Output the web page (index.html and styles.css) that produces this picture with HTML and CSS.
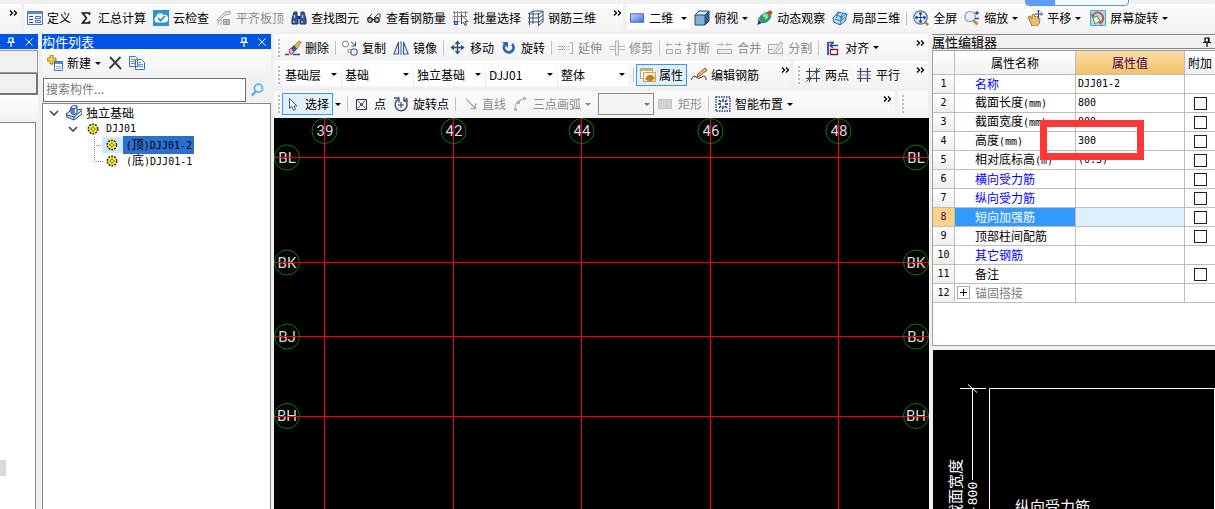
FILE: index.html
```html
<!DOCTYPE html>
<html lang="zh-CN">
<head>
<meta charset="utf-8">
<title>构件列表</title>
<link rel="stylesheet" href="styles.css">
</head>
<body>
<svg class="defs" aria-hidden="true">
  <linearGradient id="blue" x1="0" y1="0" x2="1" y2="1"><stop offset="0" stop-color="#c3daff"/><stop offset="1" stop-color="#3f6fe0"/></linearGradient>
  <symbol id="i-define" viewBox="0 0 16 16"><path d="M.5 1.500h15v13H.5z" fill="#eef4fc" stroke="#4a76b8"/><path d="M1 2h14v2H1z" fill="#5d8fd6"/><path d="M2 6.500h4M2 9.500h4M2 12.500h4" stroke="#24509a"/><path d="M8.500 6.500h5v2h-5zM8.500 10.500h5v2h-5z" fill="#fff" stroke="#4a76b8"/></symbol>
  <symbol id="i-sigma" viewBox="0 0 16 16"><path d="M11.500 5V3H4.500l4 5-4 5h7v-2" fill="none" stroke="#111" stroke-width="1.600"/></symbol>
  <symbol id="i-cloud" viewBox="0 0 16 16"><path d="M0 0h16v16H0z" fill="#2b93dc"/><path d="M4 12.500a3 3 0 0 1-.8-5.700A4 4 0 0 1 10.500 5a3.800 3.800 0 0 1 1.800 7.400z" fill="#fff"/><path d="M5 8l2.500 2.500L12 6" fill="none" stroke="#1c7fcb" stroke-width="1.600"/></symbol>
  <symbol id="i-slab" viewBox="0 0 16 16"><path d="M1 10l8-8 5-1v3l-5 1-6 6zM2 15v-5M5 15V9" stroke="#aaa" fill="#e2e2e2"/><path d="M7.500 9.500h6v5h-6z" fill="#ccc" stroke="#999"/><path d="M10.500 9v6M7 12h7" stroke="#999"/></symbol>
  <symbol id="i-bino" viewBox="0 0 16 16"><path d="M3 2h3v3l1 2v7H1V9zM10 2h3l2 7v5H9V7l1-2z" fill="#35589a" stroke="#1e376c"/><path d="M6 6h4v3H6z" fill="#1e376c"/><path d="M3.500 5v3M11.500 5v3M3 11v2M11 11v2" stroke="#a9c4f0" stroke-width="1.400"/></symbol>
  <symbol id="i-glass" viewBox="0 0 16 16"><path d="M1 9l5-5M8 8l4-4q2-1 2 1v3" fill="none" stroke="#444"/><circle cx="4" cy="10" r="2.300" fill="#bbb" stroke="#222" stroke-width="1.200"/><circle cx="11" cy="10" r="2.300" fill="#bbb" stroke="#222" stroke-width="1.200"/><path d="M6 9.500h3" stroke="#222"/></symbol>
  <symbol id="i-batch" viewBox="0 0 16 16"><path d="M1.500 1v11M4.500 1v11M8.500 1v8M0 2.500h15M0 6.500h14M0 11.500h7M12.500 1v5" stroke="#888" fill="none"/><path d="M1 11h4v4H1z" fill="#2448c0"/><path d="M2 12h2v2H2z" fill="#8fb0f0"/><path d="M8.500 5v9l2-2 1.500 3.500 1.500-.7-1.500-3.300H15z" fill="#fff" stroke="#446"/></symbol>
  <symbol id="i-rebar" viewBox="0 0 16 16"><path d="M0 4l5-3h10v11l-4 3M5 1v13M1.500 3v12M10.500 3v13M0 8h11l4-3M0 12h11l4-3M2 4h9l4-3" fill="none" stroke="#3b5278"/></symbol>
  <symbol id="i-rect" viewBox="0 0 16 16"><path d="M.5 3.500h14v9H.5z" fill="url(#blue)" stroke="#365fd4"/></symbol>
  <symbol id="i-cube" viewBox="0 0 16 16"><path d="M1 5l4-4h10l-4 4z" fill="#d3e8f8"/><path d="M11 5l4-4v10l-4 4z" fill="#355f8c"/><path d="M1 5h10v10H1z" fill="#83b1dc"/><path d="M1 5l4-4h10v10l-4 4H1zM1 5h10v10M11 5l4-4" fill="none" stroke="#24496e"/></symbol>
  <symbol id="i-orbit" viewBox="0 0 16 16"><path d="M0 15l2-5 3 3z" fill="#333"/><ellipse cx="8.500" cy="7.500" rx="6.500" ry="4.500" transform="rotate(-45 8.500 7.500)" fill="#29a54a"/><path d="M8 3q4 1 3 5l-3 2q0-4-3-4z" fill="#8de39a"/><path d="M2 12Q0 10 5 5M5 13q6-2 9-7" fill="none" stroke="#277fc0" stroke-width="1.300"/><circle cx="13" cy="2.800" r="2.200" fill="#d74020"/></symbol>
  <symbol id="i-local" viewBox="0 0 16 16"><path d="M1 8l5-6 9 2-2 7-5 4-6-3z" fill="#b9dcf4" stroke="#246b9e"/><path d="M4 5l6 2-2 7M10 7l4-3M3 9l6 2 4-4M7 2l-3 6M11 3L8 9" fill="none" stroke="#2f7bb0"/></symbol>
  <symbol id="i-full" viewBox="0 0 16 16"><circle cx="7.500" cy="7.500" r="6.700" fill="#ddeafa" stroke="#5d7aa0" stroke-width="1.300"/><path d="M7.500 3v9M3 7.500h9M6 4l1.500-2L9 4zM6 11l1.500 2L9 11zM4 6L2 7.500 4 9zM11 6l2 1.500L11 9z" stroke="#254f9c" fill="#254f9c"/><path d="M12.500 12.500l2.500 2.500" stroke="#c18628" stroke-width="2.500"/></symbol>
  <symbol id="i-zoom" viewBox="0 0 16 16"><circle cx="6" cy="6.500" r="5.200" fill="#e4effa" stroke="#92a6bd" stroke-width="1.300"/><path d="M9.500 10.500l4 4" stroke="#c18e3c" stroke-width="3"/><path d="M13 1v4M11 3h4M11 8.500h4" stroke="#27539a" stroke-width="1.300"/></symbol>
  <symbol id="i-pan" viewBox="0 0 16 16"><path d="M1 7l2-1 2 3V5l2-1 1 3 2-1 1 2 2 1-1 5-3 2H5z" fill="#e8bd6c" stroke="#a77a30"/><path d="M11.500 0v9M8 4h7M10 1.500L11.500 0 13 1.500M14 2.500L15.500 4 14 5.500" fill="none" stroke="#2a4b8b"/></symbol>
  <symbol id="i-turn" viewBox="0 0 16 16"><path d="M.5.5h15v15H.5z" fill="#a7ddf2" stroke="#49abc9"/><path d="M3 8l4-2 3 5-5 3z" fill="#f5f5c8" stroke="#55905a"/><path d="M3 5q3-4 7-2 4 2 3 7-1 2-3 3" fill="none" stroke="#e2443d" stroke-width="1.800"/><path d="M1 3l1 5 3-2zM12 11l-4 1 3 3z" fill="#e2443d"/></symbol>
  <symbol id="i-erase" viewBox="0 0 16 16"><path d="M9 6l5-5 2 1-4 7z" fill="#f2b445" stroke="#7d5a20" stroke-width=".7"/><path d="M6 8l3-3 3 4-3 3z" fill="#2b54a1"/><path d="M4 10l2-2 3 4-2 2H5z" fill="#f5b0c4" stroke="#a34560"/><path d="M0 14.500h4M8 14.500h7" stroke="#264e87" stroke-width="1.600"/></symbol>
  <symbol id="i-copy" viewBox="0 0 16 16"><circle cx="3.500" cy="4" r="3" fill="#f8fbff" stroke="#66809c"/><circle cx="7.500" cy="11" r="1.700" fill="none" stroke="#889"/><circle cx="12" cy="12" r="3.200" fill="#edf2f8" stroke="#66738a" stroke-width="1.300"/><path d="M9 2l4 3M13.500 2v4h-4" fill="none" stroke="#2c508d"/></symbol>
  <symbol id="i-mirror" viewBox="0 0 16 16"><path d="M5.500 2v12H.8zM10.500 2v12h4.700z" fill="#e7effb" stroke="#3f60a0" stroke-width="1.200"/><path d="M8 1v14" stroke="#3f60a0"/></symbol>
  <symbol id="i-move" viewBox="0 0 16 16"><path d="M7.500 2v11M2 7.500h11M5.500 4l2-2.500 2 2.500M5.500 11l2 2.500 2-2.500M4 5.500L1.500 7.500 4 9.500M11 5.500l2.500 2-2.500 2" fill="none" stroke="#304c82" stroke-width="1.400"/></symbol>
  <symbol id="i-rotate" viewBox="0 0 16 16"><path d="M4 4.500a4.800 4.800 0 1 0 7-.5" fill="none" stroke="#3263be" stroke-width="2.800"/><path d="M1 2h6v6z" fill="#3263be"/></symbol>
  <symbol id="i-extend" viewBox="0 0 16 16"><path d="M0 6.500h5v3H0M11.500 2.500h3v11h-3" fill="none" stroke="#aaa"/><path d="M6 6.500h5M6 9.500h5" stroke="#aaa" stroke-dasharray="1 1"/></symbol>
  <symbol id="i-trim" viewBox="0 0 16 16"><path d="M6.500 1v14h3V1zM0 6.500h6M0 9.500h6M10 6.500h6M10 9.500h6" fill="#eee" stroke="#b2b2b2"/></symbol>
  <symbol id="i-break" viewBox="0 0 16 16"><path d="M.5 9.500h6v4h-6zM9.500 9.500h5v4h-5z" fill="#eee" stroke="#aaa"/><path d="M0 4.500h6M2.500 2.500l-2 2 2 2M9 4.500h6M12.500 2.500l2 2-2 2" fill="none" stroke="#aaa"/></symbol>
  <symbol id="i-join" viewBox="0 0 16 16"><path d="M.5 9.500h14v4H.5z" fill="#eee" stroke="#aaa"/><path d="M0 4.500h6M4 2.500l2 2-2 2M9 4.500h6M11 2.500l-2 2 2 2" fill="none" stroke="#aaa"/></symbol>
  <symbol id="i-split" viewBox="0 0 16 16"><path d="M10 4.500H.5v9h14v-6M5 14l7-11 2-1v3L7 14M0 9.500h5" fill="#eee" stroke="#aaa"/></symbol>
  <symbol id="i-align" viewBox="0 0 16 16"><path d="M3 2v13" stroke="#18336c" stroke-width="1.600"/><path d="M5.500 9.500h7v5h-7z" fill="#fff" stroke="#8c1b2e" stroke-width="1.300"/><path d="M5 5.500h8M8 3L5 5.500 8 8M4 2.500h5" fill="none" stroke="#2547a8" stroke-width="1.300"/></symbol>
  <symbol id="i-prop" viewBox="0 0 16 16"><path d="M.5 1.500h12v10H.5z" fill="#fff" stroke="#a4a4a4"/><path d="M1 2h11v2H1z" fill="#e2aa55"/><path d="M3.500 5.500h12v9h-12z" fill="#fff4db" stroke="#e39636"/><path d="M5 12l3-4h4l3 3-3 3H8z" fill="#b98026"/></symbol>
  <symbol id="i-edit" viewBox="0 0 16 16"><path d="M6 10l1-3 7-6 2 2-7 6z" fill="#edb768" stroke="#8a643b"/><path d="M0 13q3-6 5-3t6 0 4 3" fill="none" stroke="#333"/></symbol>
  <symbol id="i-two" viewBox="0 0 16 16"><path d="M4.500 1v14M11.500 1v14M1 4.500h14M1 11.500h14" stroke="#223a7a"/><path d="M1 15L15 1" stroke="#c3443e"/><circle cx="4.500" cy="11.500" r="1.600" fill="#157a25"/><circle cx="11.500" cy="4.500" r="1.600" fill="#157a25"/></symbol>
  <symbol id="i-par" viewBox="0 0 16 16"><path d="M4.500 1v14M11.500 1v14" stroke="#3b4a88" stroke-width="1.400"/><path d="M1 4.500h14M1 11.500h14" stroke="#3b4a88"/><path d="M1 8h14" stroke="#cf6b72"/></symbol>
  <symbol id="i-cursor" viewBox="0 0 16 16"><path d="M3.500 2.500v10l2.500-2 1.500 4 2-1L8 10h3z" fill="#fff" stroke="#4b5d7a"/></symbol>
  <symbol id="i-point" viewBox="0 0 16 16"><path d="M2.500 3.500h10v10h-10z" fill="#fff" stroke="#25346a"/><path d="M3.500 4.500l8 8M11.500 4.500l-8 8" stroke="#3249a6"/><circle cx="7.500" cy="8.500" r="1.700" fill="#cd2f43"/></symbol>
  <symbol id="i-rpoint" viewBox="0 0 16 16"><path d="M5 3.500a6 6 0 1 0 6.500.2" fill="none" stroke="#3f5876" stroke-width="1.500"/><path d="M6 6.500V2H1M11 1v4h4" fill="none" stroke="#31548f" stroke-width="1.400"/><path d="M8 6v6M5 9h6" stroke="#333"/><path d="M12.500 2h2v2h-2z" fill="#cd2f43"/></symbol>
  <symbol id="i-line" viewBox="0 0 16 16"><path d="M4 3l9 9M8.500 12.500h5v-5" fill="none" stroke="#aaa" stroke-width="1.400"/></symbol>
  <symbol id="i-arc" viewBox="0 0 16 16"><path d="M2 14Q2 3 13 3" fill="none" stroke="#bbb" stroke-width="1.300"/><path d="M1 12h3v3H1zM4 5h3v3H4zM10 1h3v3h-3z" fill="#b4b4b4"/></symbol>
  <symbol id="i-grey" viewBox="0 0 16 16"><path d="M.5 3.500h13v9H.5z" fill="#d2d2d2" stroke="#c3c3c3"/></symbol>
  <symbol id="i-smart" viewBox="0 0 16 16"><path d="M1 1h14v14H1z" fill="#f3f7ff" stroke="#223d78" stroke-width="1.400" stroke-dasharray="1.500 1"/><path d="M8 3v3M8 10v3M3 8h3M10 8h3M4 4l2 2M12 4l-2 2M4 12l2-2M12 12l-2-2" stroke="#1d2c55" stroke-width="1.400"/></symbol>
  <symbol id="i-new" viewBox="0 0 16 16"><path d="M3 0h3v3h3v3H6v3H3V6H0V3h3z" fill="#f3cf4b" stroke="#8b701e" stroke-width=".8"/><path d="M7.500 6.500h8v9h-8z" fill="#fff" stroke="#4b70ad"/><path d="M8 7h7v2H8z" fill="#5989d6"/><path d="M9 11.500h5M9 13.500h5" stroke="#7fa3dc"/></symbol>
  <symbol id="i-del" viewBox="0 0 16 16"><path d="M2 2l11 12M12.500 2L1.500 13.500" stroke="#3d3d3d" stroke-width="1.900"/></symbol>
  <symbol id="i-paste" viewBox="0 0 16 16"><path d="M.5 1.500h6l2 2v8h-8zM6.500 4.500h6l3 3v7h-9z" fill="#f1f6fd" stroke="#3f73b8"/><path d="M2 4.500h4M2 6.500h4M2 8.500h4M8 7.500h4M8 9.500h6M8 11.500h6" stroke="#5f92d2"/></symbol>
  <symbol id="i-find" viewBox="0 0 16 16"><circle cx="9" cy="6" r="4.300" fill="#e4f5ff" stroke="#62b1e3" stroke-width="1.900"/><path d="M6 9.500l-4 4.500" stroke="#62b1e3" stroke-width="2.600"/></symbol>
  <symbol id="i-base" viewBox="0 0 16 16"><path d="M0 9l4-3 1-4 3-2 3 1v4l5-1v5l-8 6-7-3z" fill="#dcecfb" stroke="#23496f"/><path d="M5 3l3 1v6M8 4l3-2M1 10l7 2 7-6M8 12v3M5 3v5l3 2 3-2V5" fill="none" stroke="#23496f"/><path d="M5 3l3 1v6L5 8z" fill="#4f86bd"/></symbol>
  <symbol id="i-gear" viewBox="0 0 12 12"><circle cx="6" cy="6" r="4.600" fill="#ffed29" stroke="#222" stroke-width="1.800" stroke-dasharray="1.800 1.100"/><circle cx="6" cy="6" r="3.800" fill="#ffed29"/><path d="M6 3.500V5M6 7v1.500M3.500 6H5M7 6h1.500" stroke="#222"/></symbol>
  <symbol id="i-pin" viewBox="0 0 8 10"><path d="M2 1h4v4H2zM5.500 1v4M0 5.500h8M4 6v4" fill="none" stroke="currentColor" stroke-width="1.200"/></symbol>
  <symbol id="i-x" viewBox="0 0 8 8"><path d="M.5.5l7 7M7.500.5l-7 7" stroke="currentColor"/></symbol>
  <symbol id="i-more" viewBox="0 0 9 6"><path d="M1 .5L3.500 3 1 5.500M5 .5L7.500 3 5 5.500" fill="none" stroke="#000" stroke-width="1.300"/></symbol>
  <symbol id="i-chev" viewBox="0 0 10 6"><path d="M1 1l4 4 4-4" fill="none" stroke="#444" stroke-width="1.600"/></symbol>
</svg>

<div class="float-tab"></div>
<header class="top">
  <div class="bar stub"><button class="more" aria-label="更多"><svg><use href="#i-more"/></svg></button></div>
  <div class="bar snug">
    <button class="tool"><svg><use href="#i-define"/></svg>定义</button>
    <button class="tool"><svg><use href="#i-sigma"/></svg>汇总计算</button>
    <button class="tool"><svg><use href="#i-cloud"/></svg>云检查</button>
    <button class="tool" disabled><svg><use href="#i-slab"/></svg>平齐板顶</button>
    <button class="tool"><svg><use href="#i-bino"/></svg>查找图元</button>
    <button class="tool"><svg><use href="#i-glass"/></svg>查看钢筋量</button>
    <button class="tool"><svg><use href="#i-batch"/></svg>批量选择</button>
    <button class="tool"><svg><use href="#i-rebar"/></svg>钢筋三维</button>
    <button class="more" aria-label="更多"><svg><use href="#i-more"/></svg></button>
  </div>
  <div class="bar grow">
    <label class="combo view"><svg><use href="#i-rect"/></svg><select aria-label="视图"><option>二维</option></select></label>
    <button class="tool drop"><svg><use href="#i-cube"/></svg>俯视</button>
    <button class="tool"><svg><use href="#i-orbit"/></svg>动态观察</button>
    <button class="tool"><svg><use href="#i-local"/></svg>局部三维</button>
    <i class="sep"></i>
    <button class="tool"><svg><use href="#i-full"/></svg>全屏</button>
    <button class="tool drop"><svg><use href="#i-zoom"/></svg>缩放</button>
    <button class="tool drop"><svg><use href="#i-pan"/></svg>平移</button>
    <button class="tool drop"><svg><use href="#i-turn"/></svg>屏幕旋转</button>
  </div>
</header>

<main class="work">
  <aside class="dock">
    <div class="title"><button aria-label="固定"><svg class="pin"><use href="#i-pin"/></svg></button><button aria-label="关闭"><svg class="x"><use href="#i-x"/></svg></button></div>
    <div class="tab"></div><div class="tab second"></div><div class="strip"></div>
    <div class="page"><i class="thumb"></i></div>
  </aside>

  <section class="parts">
    <div class="title"><h2>构件列表</h2><button aria-label="固定"><svg class="pin"><use href="#i-pin"/></svg></button><button aria-label="关闭"><svg class="x"><use href="#i-x"/></svg></button></div>
    <div class="bar parts-bar">
      <button class="tool drop"><svg><use href="#i-new"/></svg>新建</button>
      <button class="tool" aria-label="删除构件"><svg><use href="#i-del"/></svg></button>
      <button class="tool" aria-label="复制构件"><svg><use href="#i-paste"/></svg></button>
    </div>
    <div class="search"><input type="text" aria-label="搜索构件" placeholder="搜索构件..."><button aria-label="搜索"><svg><use href="#i-find"/></svg></button></div>
    <div class="tree">
      <ul>
        <li><div class="node"><svg class="chev"><use href="#i-chev"/></svg><svg class="big"><use href="#i-base"/></svg><span>独立基础</span></div>
          <ul>
            <li><div class="node"><svg class="chev"><use href="#i-chev"/></svg><svg class="gear"><use href="#i-gear"/></svg><span class="lat">DJJ01</span></div>
              <ul class="leaves">
                <li class="selected"><div class="node"><svg class="gear"><use href="#i-gear"/></svg><span><b class="lat">(</b>顶<b class="lat">)DJJ01-2</b></span></div></li>
                <li><div class="node"><svg class="gear"><use href="#i-gear"/></svg><span><b class="lat">(</b>底<b class="lat">)DJJ01-1</b></span></div></li>
              </ul>
            </li>
          </ul>
        </li>
      </ul>
    </div>
  </section>

  <section class="center">
    <div class="bar">
      <i class="grip"></i>
      <button class="tool"><svg><use href="#i-erase"/></svg>删除</button><i class="sep"></i>
      <button class="tool"><svg><use href="#i-copy"/></svg>复制</button>
      <button class="tool"><svg><use href="#i-mirror"/></svg>镜像</button><i class="sep"></i>
      <button class="tool"><svg><use href="#i-move"/></svg>移动</button>
      <button class="tool"><svg><use href="#i-rotate"/></svg>旋转</button><i class="sep"></i>
      <button class="tool" disabled><svg><use href="#i-extend"/></svg>延伸</button>
      <button class="tool" disabled><svg><use href="#i-trim"/></svg>修剪</button><i class="sep"></i>
      <button class="tool" disabled><svg><use href="#i-break"/></svg>打断</button>
      <button class="tool" disabled><svg><use href="#i-join"/></svg>合并</button>
      <button class="tool" disabled><svg><use href="#i-split"/></svg>分割</button><i class="sep"></i>
      <button class="tool drop"><svg><use href="#i-align"/></svg>对齐</button>
      <button class="more" aria-label="更多"><svg><use href="#i-more"/></svg></button>
    </div>
    <div class="row">
      <div class="bar snug">
        <i class="grip"></i>
        <div class="combos">
          <label class="combo short"><select aria-label="楼层"><option>基础层</option></select></label>
          <label class="combo"><select aria-label="构件分类"><option>基础</option></select></label>
          <label class="combo"><select aria-label="构件类型"><option>独立基础</option></select></label>
          <label class="combo"><select aria-label="构件名称"><option>DJJ01</option></select></label>
          <label class="combo"><select aria-label="范围"><option>整体</option></select></label>
        </div>
        <i class="sep tight"></i>
        <button class="tool active"><svg><use href="#i-prop"/></svg>属性</button>
        <button class="tool near"><svg><use href="#i-edit"/></svg>编辑钢筋</button>
        <button class="more" aria-label="更多"><svg><use href="#i-more"/></svg></button>
      </div>
      <div class="bar grow">
        <i class="grip"></i>
        <button class="tool"><svg><use href="#i-two"/></svg>两点</button>
        <button class="tool"><svg><use href="#i-par"/></svg>平行</button>
        <button class="more" aria-label="更多"><svg><use href="#i-more"/></svg></button>
      </div>
    </div>
    <div class="row last">
      <div class="bar grow">
        <i class="grip"></i>
        <button class="tool active"><svg><use href="#i-cursor"/></svg>选择</button>
        <button class="arrow" aria-label="选择方式"></button><i class="sep"></i>
        <button class="tool"><svg><use href="#i-point"/></svg>点</button>
        <button class="tool"><svg><use href="#i-rpoint"/></svg>旋转点</button><i class="sep"></i>
        <button class="tool" disabled><svg><use href="#i-line"/></svg>直线</button>
        <button class="tool drop" disabled><svg><use href="#i-arc"/></svg>三点画弧</button>
        <label class="combo boxed"><select aria-label="画弧方式" disabled><option></option></select></label>
        <button class="tool near" disabled><svg><use href="#i-grey"/></svg>矩形</button><i class="sep"></i>
        <button class="tool drop"><svg><use href="#i-smart"/></svg>智能布置</button>
        <button class="more" aria-label="更多"><svg><use href="#i-more"/></svg></button>
      </div>
      <div class="bar end"><i class="grip"></i></div>
    </div>
    <svg class="canvas" viewBox="0 0 655 391" preserveAspectRatio="xMinYMin slice" role="img" aria-label="轴网">
      <g class="mark">
        <text x="51" y="18">39</text><text x="180" y="18">42</text><text x="308" y="18">44</text><text x="437" y="18">46</text><text x="565" y="18">48</text>
        <text x="13" y="45">BL</text><text x="13" y="150">BK</text><text x="13" y="224">BJ</text><text x="13" y="303">BH</text>
        <text x="642" y="45">BL</text><text x="642" y="150">BK</text><text x="642" y="224">BJ</text><text x="642" y="303">BH</text>
      </g>
      <path class="axis" d="M50.500 0v391M179.500 0v391M307.500 0v391M436.500 0v391M564.500 0v391M0 39.500h655M0 144.500h655M0 218.500h655M0 298.500h655"/>
      <g class="bubble">
        <circle cx="50.500" cy="13" r="12.500"/><circle cx="179.500" cy="13" r="12.500"/><circle cx="307.500" cy="13" r="12.500"/><circle cx="436.500" cy="13" r="12.500"/><circle cx="564.500" cy="13" r="12.500"/>
        <circle cx="13" cy="39.500" r="12.500"/><circle cx="13" cy="144.500" r="12.500"/><circle cx="13" cy="218.500" r="12.500"/><circle cx="13" cy="298" r="12.500"/>
        <circle cx="642" cy="39.500" r="12.500"/><circle cx="642" cy="144.500" r="12.500"/><circle cx="642" cy="218.500" r="12.500"/><circle cx="642" cy="298" r="12.500"/>
      </g>
    </svg>
  </section>

  <section class="props">
    <div class="title plain"><h2>属性编辑器</h2><button aria-label="固定"><svg class="pin"><use href="#i-pin"/></svg></button></div>
    <div class="sheet">
      <table>
        <colgroup><col class="c-no"><col><col class="c-val"><col class="c-add"></colgroup>
        <thead><tr><th></th><th>属性名称</th><th class="hot">属性值</th><th>附加</th></tr></thead>
        <tbody>
          <tr><th>1</th><td class="key blue">名称</td><td class="lat">DJJ01-2</td><td></td></tr>
          <tr><th>2</th><td class="key">截面长度<span class="lat">(mm)</span></td><td class="lat">800</td><td><input type="checkbox" aria-label="附加 截面长度"></td></tr>
          <tr><th>3</th><td class="key">截面宽度<span class="lat">(mm)</span></td><td class="lat">800</td><td><input type="checkbox" aria-label="附加 截面宽度"></td></tr>
          <tr><th>4</th><td class="key">高度<span class="lat">(mm)</span></td><td class="lat marked">300<i class="callout"></i></td><td><input type="checkbox" aria-label="附加 高度"></td></tr>
          <tr><th>5</th><td class="key">相对底标高<span class="lat">(m)</span></td><td class="lat">(0.3)</td><td><input type="checkbox" aria-label="附加 相对底标高"></td></tr>
          <tr><th>6</th><td class="key blue">横向受力筋</td><td></td><td><input type="checkbox" aria-label="附加 横向受力筋"></td></tr>
          <tr><th>7</th><td class="key blue">纵向受力筋</td><td></td><td><input type="checkbox" aria-label="附加 纵向受力筋"></td></tr>
          <tr class="current"><th>8</th><td class="key">短向加强筋</td><td></td><td><input type="checkbox" aria-label="附加 短向加强筋"></td></tr>
          <tr><th>9</th><td class="key">顶部柱间配筋</td><td></td><td><input type="checkbox" aria-label="附加 顶部柱间配筋"></td></tr>
          <tr><th>10</th><td class="key blue">其它钢筋</td><td></td><td></td></tr>
          <tr><th>11</th><td class="key">备注</td><td></td><td><input type="checkbox" aria-label="附加 备注"></td></tr>
          <tr><th>12</th><td class="key group"><button class="plus" aria-label="展开"></button>锚固搭接</td><td></td><td></td></tr>
        </tbody>
      </table>
    </div>
    <svg class="preview" viewBox="0 0 282 159" preserveAspectRatio="xMinYMin slice" role="img" aria-label="截面示意">
      <path d="M56.500 159V38.500h225V159M27 38.500h26M39.500 38v92M35 34.500l9 8"/>
      <text class="cad" transform="translate(28 169) rotate(-90)">截面宽度</text>
      <text class="dim" transform="translate(44 163) rotate(-90)">-800</text>
      <text class="cad" x="82" y="162">纵向受力筋</text>
    </svg>
  </section>
</main>
</body>
</html>
```

FILE: styles.css
```css
* { box-sizing: border-box; }
body {
  margin: 0;
  height: 100vh;
  display: flex;
  flex-direction: column;
  overflow: hidden;
  background: #f0f0f0;
  color: #000;
  font: 12px/16px "Noto Sans CJK SC", "Open Sans", sans-serif;
}
button, select, input { font: inherit; color: inherit; margin: 0; padding: 0; border: 0; background: none; border-radius: 0; }
ul { list-style: none; margin: 0; padding: 0; }
h2 { margin: 0; font-size: 13px; font-weight: 400; line-height: 15px; }
i, b { font-style: normal; font-weight: 400; }
.defs { position: absolute; width: 0; height: 0; }
.lat { font-family: "DejaVu Sans Mono", monospace; font-size: 10px; }

/* toolbars */
.top { display: flex; gap: 3px; padding-top: 4px; height: 34px; flex: none; }
.bar {
  display: flex;
  align-items: center;
  gap: 7px;
  padding: 0 3px;
  height: 27px;
  background: linear-gradient(#fcfcfc, #f2f2f2);
  border-radius: 2px;
}
.top .bar { height: 28px; }
.top .stub { padding-left: 9px; }
.top .stub .more { margin-left: 0; }
.bar.snug { padding-right: 1px; }
.grow { flex: 1; }
.tool { display: flex; align-items: center; gap: 4px; height: 22px; white-space: nowrap; flex: none; }
.tool svg { width: 16px; height: 16px; flex: none; }
.tool:disabled { color: #8c8c8c; }
.tool.drop::after, .arrow::after, .combo::after {
  content: "";
  border: 3px solid transparent;
  border-top-color: currentColor;
  border-bottom: 0;
}
.tool.drop { padding-right: 2px; }
.tool.active { gap: 3px; border: 1px solid #3399ff; background: #e3effb; padding: 0 3px; }
.arrow { width: 8px; height: 22px; display: flex; align-items: center; justify-content: center; margin: 0 -1px 0 -6px; }
.sep { width: 1px; height: 14px; margin: 0 -1px; background: #c4c4c4; flex: none; }
.sep.tight { margin: 0 -5px 0 -2px; }
.near { margin-left: -3px; }
.grip { width: 2px; height: 18px; margin-left: 1px; margin-right: -2px; flex: none; background: repeating-linear-gradient(#bbb 0 2px, transparent 2px 4px); }
.more { margin-left: auto; height: 22px; display: flex; align-items: center; padding-bottom: 10px; flex: none; }
.more svg { width: 9px; height: 6px; }
.top .snug .more { margin-left: 10px; }
.row .snug .more { margin-left: 15px; }
.combo { display: flex; align-items: center; width: 69px; height: 22px; padding: 0 3px 0 2px; background: #fff; flex: none; }
.combo select { appearance: none; flex: 1; min-width: 0; outline: 0; opacity: 1; }
.combo.short { width: 57px; }
.combos { display: flex; gap: 3px; margin-left: -2px; }
.combo.view { width: 62px; margin-left: -1px; gap: 4px; margin-right: -3px; }
.combo.view svg { width: 15px; height: 16px; }
.combo.boxed { width: 56px; margin-left: -2px; border: 1px solid #8a8a8a; background: #f4f4f4; color: #777; }
.center { display: flex; flex-direction: column; min-width: 0; margin-left: 1px; }
.center > .bar { margin-right: 1px; }
.row { display: flex; gap: 3px; margin-right: 1px; }
.row.last { margin: 3px 1px 1px 0; }
.row.last .bar { height: 26px; }
.row.last .active { margin-left: -3px; }
.end { width: 30px; }

/* workspace */
.work { flex: 1; min-height: 0; display: grid; grid-template-columns: 38px 229px minmax(0, 1fr) 283px; column-gap: 3px; }
.dock { display: flex; flex-direction: column; min-height: 0; }
.parts { margin-left: 1px; margin-right: -1px; display: flex; flex-direction: column; min-height: 0; }
.title { display: flex; align-items: center; height: 15px; flex: none; background: #0054e3; color: #fff; }
.title h2 { flex: 1; white-space: nowrap; }
.title button { display: flex; }
.pin { width: 8px; height: 10px; }
.x { width: 8px; height: 8px; }
.parts .title { gap: 10px; padding-right: 5px; }
.dock .title { gap: 10px; justify-content: flex-end; padding-right: 5px; }
.tab { height: 23px; margin-top: 1px; border: 1px solid #999; border-left: 0; background: #f0f0f0; }
.second { height: 22px; margin-top: 0; border-width: 1px 2px 2px 0; border-color: #777; }
.strip { height: 27px; background: linear-gradient(#fff, #f0f0f0); flex: none; }
.page { flex: 1; background: #fff; border: 1px solid #888; border-width: 1px 1px 0 0; margin-right: 2px; display: flex; align-items: flex-end; padding-bottom: 33px; }
.thumb { width: 6px; height: 16px; background: #d9d9d9; }
.parts-bar { height: 28px; padding-left: 5px; gap: 5px; flex: none; }
.search { display: flex; gap: 4px; height: 26px; padding: 1px 0 1px 1px; flex: none; }
.search input { flex: 1; min-width: 0; height: 24px; border: 1px solid #707070; background: #fff; padding: 0 2px 4px; }
.search input::placeholder { color: #777; opacity: 1; }
.search button { width: 21px; display: flex; align-items: center; }
.search svg { width: 15px; height: 16px; }
.tree { flex: 1; background: #fff; border: 1px solid #828790; border-bottom: 0; padding: 1px 0 0 6px; }
.node { display: flex; align-items: center; height: 16px; white-space: nowrap; }
.chev { width: 10px; height: 6px; margin-right: 7px; }
.big { width: 16px; height: 16px; margin-right: 4px; }
.gear { width: 12px; height: 12px; margin-right: 7px; }
.tree li li { padding-left: 19px; }
.chev + .gear { margin-left: 2px; }
.tree li .leaves { padding-left: 26px; }
.tree .leaves li {
  padding-left: 8px;
  background:
    repeating-linear-gradient(90deg, #888 0 1px, transparent 1px 2px) left center / 9px 1px no-repeat,
    repeating-linear-gradient(#888 0 1px, transparent 1px 2px) left top / 1px 100% no-repeat;
}
.tree .leaves li:last-child { background-size: 9px 1px, 1px 50%; }
.leaves .node { padding-left: 4px; }
.leaves .gear { margin-right: 5px; }
.leaves .node span { padding: 0 2px 0 3px; }
.selected .node { background: #cde8ff; width: 92px; }
.selected span { background: #2a70cf; }

/* drawing area */
.canvas { flex: 1; min-height: 0; width: 100%; background: #000; }
.axis { stroke: #f00; fill: none; }
.bubble { fill: none; stroke: #078007; }
.mark { fill: #d8d8d8; text-anchor: middle; font: 15px "Roboto", sans-serif; }

/* properties */
.props { display: flex; flex-direction: column; min-width: 0; }
.title.plain { background: #f0f0f0; color: #000; padding-right: 4px; border-top: 1px solid #888; border-bottom: 1px solid #888; }
.sheet { height: 296px; flex: none; margin-top: 1px; border: 1px solid #a0a0a0; border-right: 0; background: #fff; }
table { width: 100%; border-collapse: separate; border-spacing: 0; table-layout: fixed; }
.c-no { width: 22px; }
.c-val { width: 109px; }
.c-add { width: 30px; }
th, td { height: 19px; padding: 0; border: 0 solid #bdbdbd; border-width: 0 1px 1px 0; line-height: 16px; font-weight: 400; white-space: nowrap; }
th:last-child, td:last-child { border-right: 0; text-align: center; }
thead th { height: 24px; background: linear-gradient(#fff, #f1f1f1); }
thead .hot { background: linear-gradient(#f9dca4, #f1c36a); color: #4b0055; }
tbody th { background: linear-gradient(#fff, #eee); font-family: "DejaVu Sans Mono", monospace; font-size: 10px; }
td { padding-left: 2px; }
td:last-child { padding: 0; }
.key { padding-left: 20px; }
.blue { color: #00f; }
.current th { background: #ffd28a; color: #4b0055; }
.current td { background: #e0efff; }
.current .key { background: #3399ff; color: #fff; }
.current td:last-child { background: #fff; }
input[type="checkbox"] { appearance: none; width: 13px; height: 13px; border: 1px solid #222; background: #fff; display: block; margin: 0 auto; }
.group { color: #808080; position: relative; }
.plus {
  position: absolute; left: 2px; top: 2px; width: 13px; height: 13px; border: 1px solid #aaa;
  background: linear-gradient(#000, #000) center / 7px 1px no-repeat, linear-gradient(#000, #000) center / 1px 7px no-repeat, #fff;
}
.marked { position: relative; }
.callout { position: absolute; z-index: 1; left: -36px; top: -12px; width: 104px; height: 40px; border: 7px solid #fd3636; }
.preview { flex: 1; min-height: 0; margin: 4px 0 0 1px; background: #000; }
.preview path { fill: none; stroke: #fff; }
.preview text { fill: #fff; }
.cad { font-size: 15px; }
.dim { font: 13px "Liberation Mono", monospace; }

/* floating tab over the header */
.float-tab {
  position: absolute; top: -6px; right: 86px; width: 104px; height: 12px; border: 1px solid #5596f5; border-radius: 4px;
  background: linear-gradient(90deg, #5b9cff 29px, #f3f8ff 29px);
}
```
